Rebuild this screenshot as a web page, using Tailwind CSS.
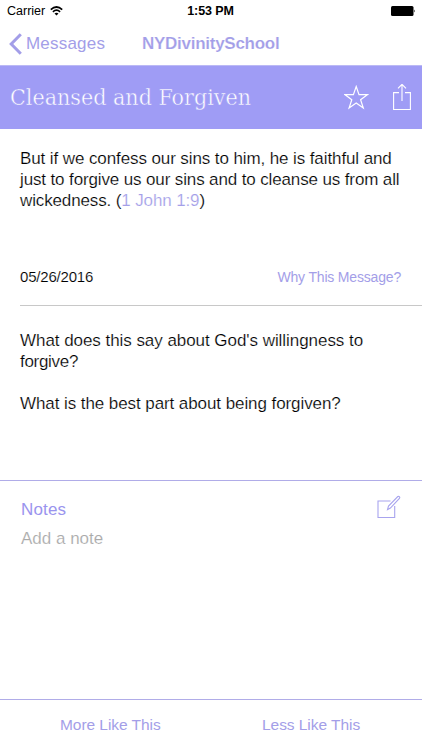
<!DOCTYPE html>
<html lang="en">
<head>
<meta charset="utf-8">
<title>Cleansed and Forgiven</title>
<script src="https://cdn.jsdelivr.net/npm/@tailwindcss/browser@4"></script>
</head>
<body class="w-[422px] h-[750px] overflow-hidden bg-white font-['Liberation_Sans',Arial,sans-serif] text-black flex flex-col whitespace-nowrap">
<header class="h-[65px] shrink-0 flex flex-col">
  <div class="h-[22px] grid grid-cols-3 items-center pl-[7px] pr-[6px] text-black">
    <div class="flex items-center gap-[5px]">
      <span class="text-[12.5px]">Carrier</span>
      <svg class="w-[13px] h-[10px]" viewBox="0 0 13 10" fill="none" stroke="#000" stroke-width="1.7"><path d="M.8 3.6Q6.5-1.6 12.2 3.6M2.9 5.8Q6.5 2.6 10.1 5.8"/><path d="M6.5 9.6 4.5 7.5Q6.5 5.9 8.5 7.5Z" fill="#000" stroke="none"/></svg>
    </div>
    <span class="pr-[2px] text-[12.5px] font-bold text-center tracking-[-0.1px]">1:53 PM</span>
    <svg class="justify-self-end w-[25px] h-[10px]" viewBox="0 0 25 10"><rect width="22.5" height="10" rx="1.5" fill="#000"/><path d="M23.3 3.5q1.6 1.5 0 3z" fill="#000"/></svg>
  </div>
  <div class="h-[43px] flex items-center text-[#a39ee8] text-[17px]">
    <svg class="ml-[9px] w-[13px] h-[22px]" viewBox="0 0 13 22" fill="none" stroke="#a39ee8" stroke-width="3"><path d="M11.8 1.2 2.2 11l9.6 9.8"/></svg>
    <span class="ml-[4px] w-[116px] tracking-[0.2px]">Messages</span>
    <span class="font-bold tracking-[-0.27px] [-webkit-text-stroke:0.15px_#fff]">NYDivinitySchool</span>
  </div>
</header>
<section class="h-[64px] shrink-0 bg-[#9f9cf5] border-t border-[#bbb9f5] flex items-center text-white">
  <h1 class="ml-[10px] w-[334px] font-['DejaVu_Serif_Condensed','DejaVu_Serif',serif] text-[23px] [-webkit-text-stroke:0.45px_#9f9cf5]">Cleansed and Forgiven</h1>
  <svg class="w-[25px] h-[25px]" viewBox="0 0 25 25" fill="none" stroke="#fff" stroke-width="1.2"><path d="M12.2 1.5 15 9.6h8.6l-7 5.1 2.7 8.3-7.1-5-7.1 5 2.7-8.3-7-5.1h8.6Z"/></svg>
  <svg class="ml-[24px] w-[18px] h-[28px]" viewBox="0 0 18 28" fill="none" stroke="#fff" stroke-width="1.1"><path d="M6 8.6H.6v16.9h16.8V8.6H12M9 17V.5M5 4.3l4-4 4 4"/></svg>
</section>
<main class="flex-1 flex flex-col">
  <p class="ml-[20px] mt-[19px] h-[109px] text-[17px] leading-[21px] [-webkit-text-stroke:0.2px_#fff]"><span class="tracking-[-0.1px]">But if we confess our sins to him, he is faithful and</span><br><span class="tracking-[-0.13px]">just to forgive us our sins and to cleanse us from all</span><br><span class="tracking-[-0.13px]">wickedness. (<span class="text-[#a39ee8]">1 John 1:9</span>)</span></p>
  <div class="ml-[20px] pr-[21px] h-[49px] border-b border-[#c8c8c8] pt-[10px] flex justify-between text-[15px] leading-[20px]">
    <span class="tracking-[-0.2px] [-webkit-text-stroke:0.15px_#fff]">05/26/2016</span>
    <span class="text-[#a39ee8] text-[14px] tracking-[-0.18px]">Why This Message?</span>
  </div>
  <p class="ml-[20px] mt-[24px] h-[150px] text-[17px] leading-[21px] [-webkit-text-stroke:0.2px_#fff]"><span class="tracking-[-0.05px]">What does this say about God's willingness to</span><br><span class="tracking-[-0.3px]">forgive?</span><br><br><span class="tracking-[-0.08px]">What is the best part about being forgiven?</span></p>
  <section class="flex-1 border-t border-[#b0ace8] pl-[21px] pr-[21px] flex justify-between">
    <div class="pt-[14px] text-[17px] leading-[29px]">
      <h2 class="text-[#9a94ee] tracking-[0.15px]">Notes</h2>
      <p class="text-[#aaa] [-webkit-text-stroke:0.15px_#fff]">Add a note</p>
    </div>
    <svg class="mt-[14px] w-[24px] h-[25px]" viewBox="0 0 24 25" fill="none" stroke="#a8a4ee" stroke-width="1.1"><path d="M13.5 6H1v16.5h16.7V11M10.5 14.6l1-3.6L20.8 1.5q1.5-.6 2 .9l-.4 1-9 9.7Z"/></svg>
  </section>
</main>
<footer class="h-[51px] shrink-0 border-t border-[#b0ace8] flex text-[#a39ee8] text-[15.5px] tracking-[-0.05px] items-center">
  <span class="ml-[60px] w-[202px]">More Like This</span>
  <span>Less Like This</span>
</footer>
</body>
</html>
